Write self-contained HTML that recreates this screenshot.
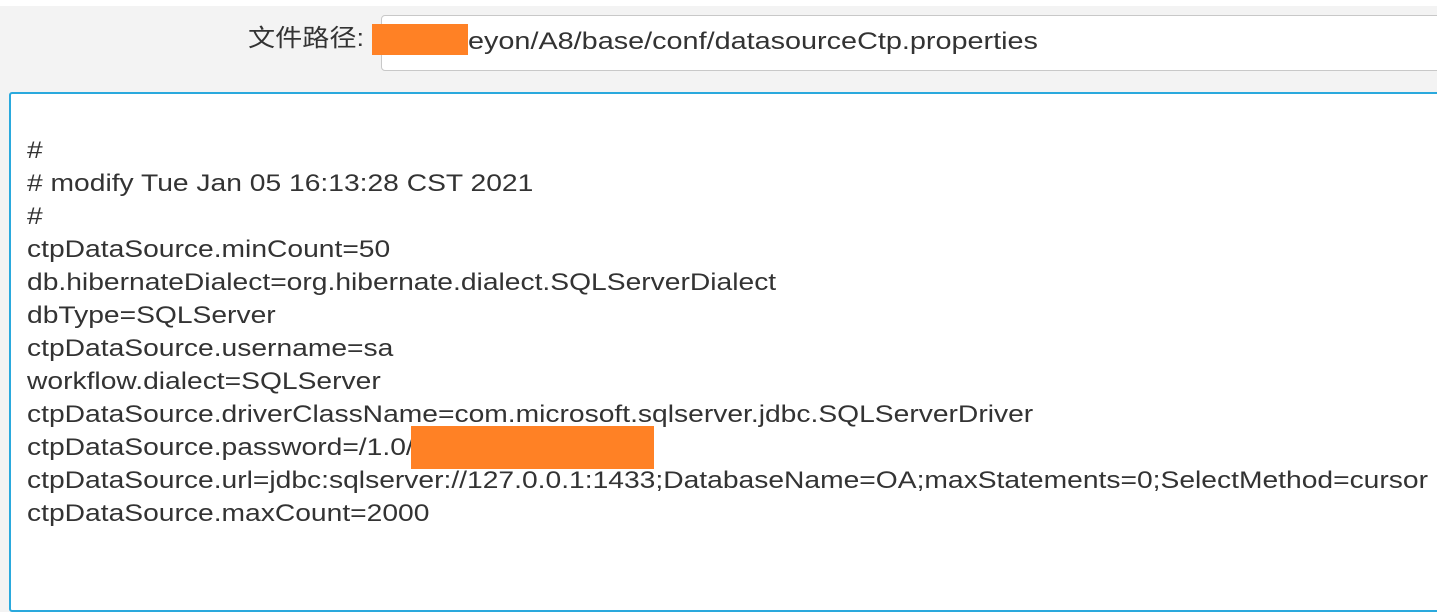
<!DOCTYPE html>
<html><head><meta charset="utf-8"><style>
html,body{margin:0;padding:0;}
body{width:1437px;height:574px;position:relative;background:#f3f3f3;overflow:hidden;font-family:"Liberation Sans","Noto Sans CJK SC",sans-serif;color:#333;}
.top{position:absolute;left:0;top:0;width:1437px;height:6px;background:#fff;}
.label{position:absolute;left:248px;top:22px;font-size:24px;line-height:34px;transform:scaleX(1.13);transform-origin:left;}
.input{position:absolute;left:381px;top:15px;width:1070px;height:56px;background:#fff;border:1px solid #c8c8c8;border-radius:4px;box-sizing:border-box;}
.input span{position:absolute;left:86px;top:9px;font-size:24px;line-height:34px;transform:scaleX(1.2);transform-origin:left;white-space:nowrap;}
.ta{position:absolute;left:9px;top:92px;width:1440px;height:520px;background:#fff;border:2px solid #2aa9dd;border-radius:3px;box-sizing:border-box;}
.lines{position:absolute;left:27px;top:134px;font-size:24px;line-height:33px;white-space:pre;transform:scaleX(1.176);transform-origin:left top;}
.o{position:absolute;background:#ff8125;}
</style></head><body>
<div class="top"></div>
<div class="label">文件路径:</div>
<div class="input"><span>eyon/A8/base/conf/datasourceCtp.properties</span></div>
<div class="o" style="left:372px;top:24px;width:96px;height:31px"></div>
<div class="ta"></div>
<div class="lines">#
# modify Tue Jan 05 16:13:28 CST 2021
#
ctpDataSource.minCount=50
db.hibernateDialect=org.hibernate.dialect.SQLServerDialect
dbType=SQLServer
ctpDataSource.username=sa
workflow.dialect=SQLServer
ctpDataSource.driverClassName=com.microsoft.sqlserver.jdbc.SQLServerDriver
ctpDataSource.password=/1.0/
ctpDataSource.url=jdbc:sqlserver://127.0.0.1:1433;DatabaseName=OA;maxStatements=0;SelectMethod=cursor
ctpDataSource.maxCount=2000</div>
<div class="o" style="left:411px;top:426px;width:243px;height:43px"></div>
</body></html>
